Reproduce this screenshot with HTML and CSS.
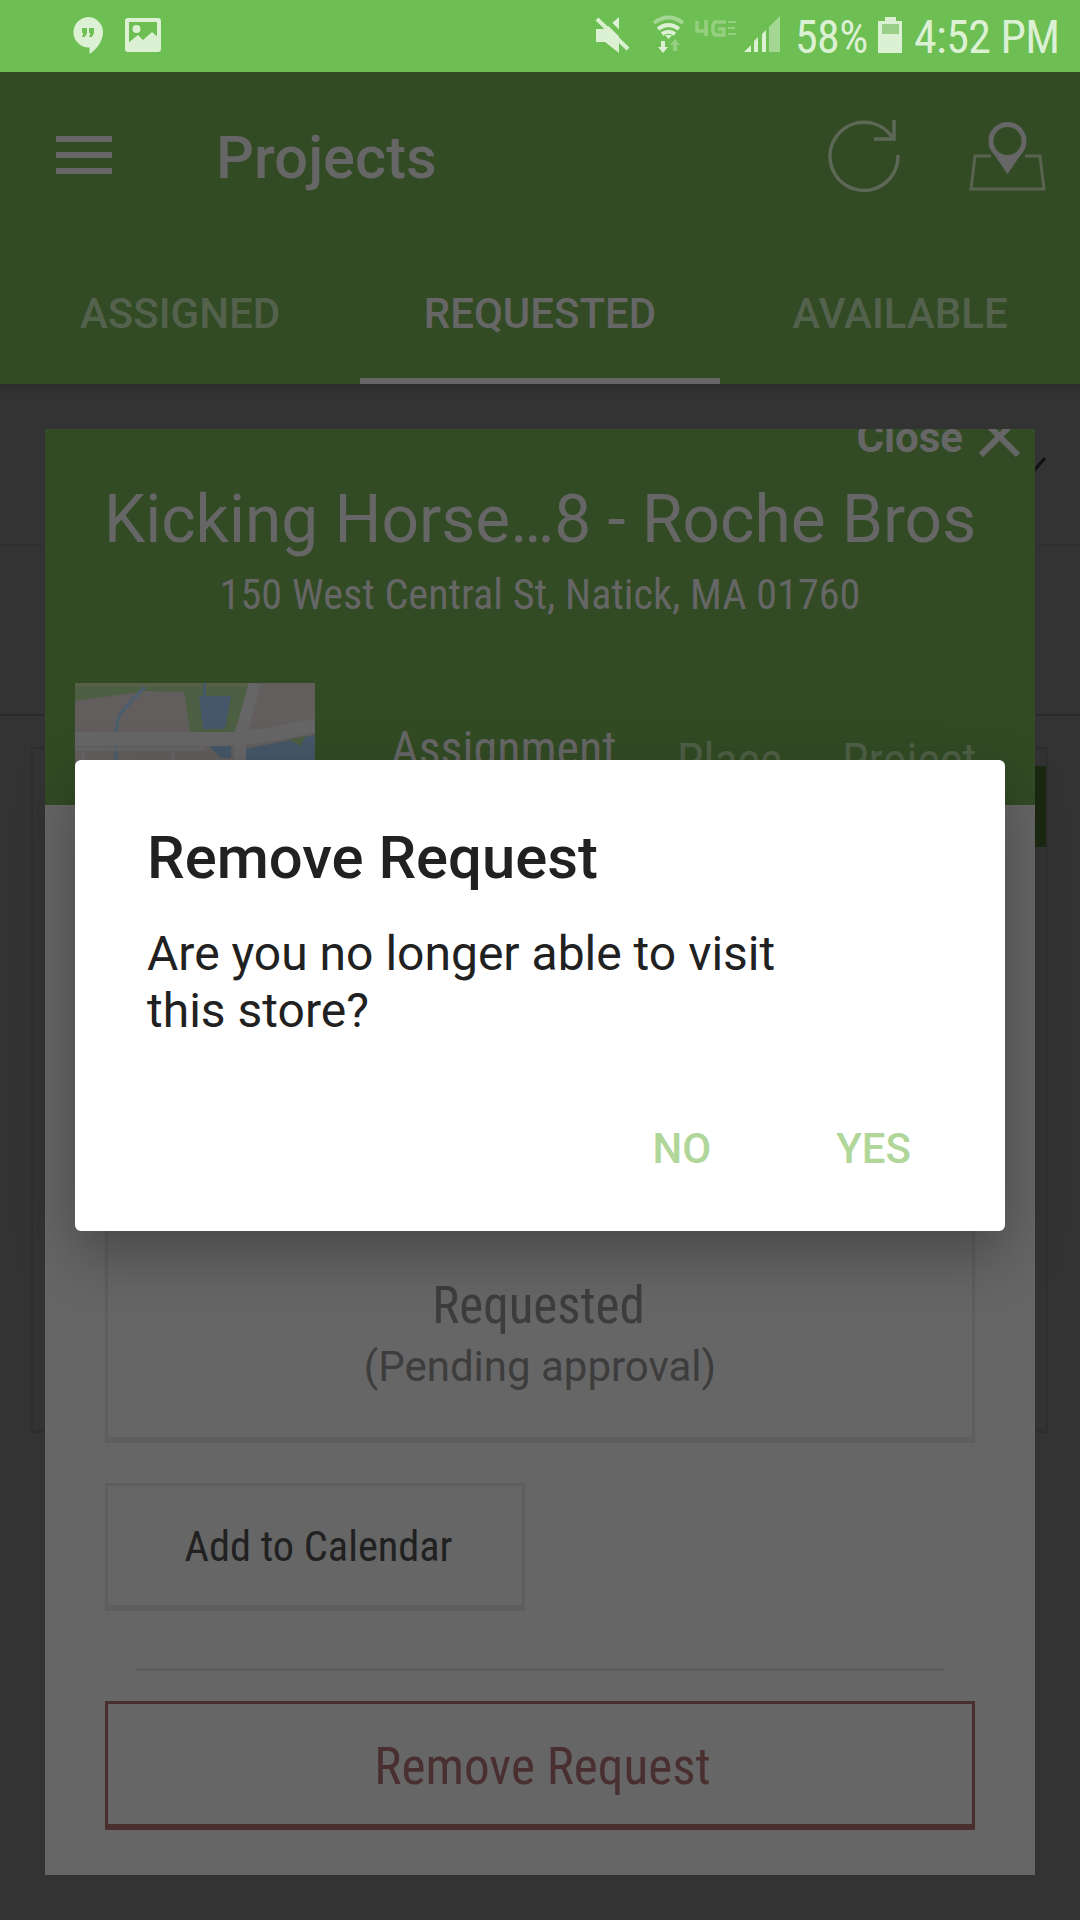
FILE: index.html
```
<!DOCTYPE html>
<html lang="en">
<head>
	<meta charset="UTF-8">
	<title>Projects</title>
	<link rel="stylesheet" href="styles.css">
</head>
<body>
	<div class="screen">
		<div class="status">
			<svg class="notify" width="90" height="72" viewBox="72 0 90 72">
				<path fill="#dcf1d3" d="M88 17a15 15 0 0 1 15 15c0 9-6 17-13.500 22v-6.500A15 15 0 0 1 88 17z"/>
				<path fill="#6dbe53" d="M82 28h5v5l-2 4h-3l1.500-4H82zM89 28h5v5l-2 4h-3l1.500-4H89z"/>
				<rect x="127" y="20" width="32" height="30" rx="1" fill="none" stroke="#dcf1d3" stroke-width="4"/>
				<circle cx="136.500" cy="29" r="4" fill="#dcf1d3"/>
				<path fill="#dcf1d3" d="M128 43l10-8 5 5 9-8 7 6v13h-31z"/>
			</svg>
			<svg class="signals" width="190" height="72" viewBox="594 0 190 72">
				<path fill="#dcf1d3" d="M596 29h9l14-12v36l-14-11h-9z"/>
				<path stroke="#6dbe53" stroke-width="5" d="M600 14l32 32"/>
				<path stroke="#dcf1d3" stroke-width="4" d="M597 19l31 30"/>
				<g fill="none" stroke="#dcf1d3" stroke-width="4">
					<path stroke="#a5d794" d="M654 23q14.500-11 29 0"/>
					<path d="M658 29q10.500-8 21 0"/>
					<path d="M662 34q6.500-4.500 13 0"/>
				</g>
				<path fill="#dcf1d3" d="M665 35h7l-3.500 4zM661 41h4v6h3l-5 6-5-6h3z"/>
				<path fill="#95d080" d="M673 51h4v-6h3l-5-6-5 6h3z"/>
				<g fill="none" stroke="#95d080" stroke-width="3.500">
					<path d="M697 21v10h11M706 20v16M726 22h-11l-2 3v7l2 3h9v-6h-6"/>
					<path stroke-width="2" d="M728 22h8M728 28h7M728 34h8"/>
				</g>
				<path fill="#a5d794" d="M780 16v36h-11V27z"/>
				<path fill="#dcf1d3" d="M744 52l7-7v7zM754 41l4-4v15h-4zM762 34l4-4v22h-4z"/>
			</svg>
			<span class="battery-text"><b class="narrow">58%</b></span>
			<svg class="battery" width="24" height="36" viewBox="0 0 24 36">
				<path fill="#dcf1d3" d="M7 0h11v4h6v32H0V4h7z"/>
				<path fill="#99cf86" d="M4 7h17v10H4z"/>
			</svg>
			<span class="clock"><b class="narrow">4:52 PM</b></span>
		</div>

		<div class="header">
			<div class="toolbar">
				<div class="menu"><i></i><i></i><i></i></div>
				<h1>Projects</h1>
				<svg width="72" height="76" viewBox="828 118 72 76" fill="none" stroke="#5e6857" stroke-width="3.500">
					<path d="M898 155a34 34 0 1 1-6-18"/>
					<path d="M894 120v19h-20"/>
				</svg>
				<svg class="pin" width="80" height="76" viewBox="968 118 80 76">
					<path fill="none" stroke="#59634f" stroke-width="3" d="M991 156h-16l-4 33h73l-4-33h-15"/>
					<path fill="#666" d="M989 147l18.500 27 18.500-27z"/>
					<circle cx="1007.500" cy="141" r="16.500" fill="#324b24" stroke="#666" stroke-width="5"/>
					<path fill="#666" d="M996 153q11.500 5 23 0l-11.500 20z"/>
				</svg>
			</div>
			<div class="tabs">
				<div>ASSIGNED</div>
				<div class="active">REQUESTED</div>
				<div>AVAILABLE</div>
			</div>
		</div>

		<div class="page">
			<!-- project list behind the card -->
			<div class="list">
				<div class="row filter">
					<svg width="30" height="20" viewBox="0 0 30 20"><path fill="none" stroke="#111" stroke-width="3" d="M2 2l13 15L28 2"/></svg>
				</div>
				<div class="row"></div>
				<div class="item"><div class="strip"></div></div>
			</div>

			<div class="card">
				<div class="card-head">
					<div class="close">Close
						<svg width="42" height="42" viewBox="0 0 42 42"><path stroke="#666" stroke-width="6" d="M2 2l37 37M39 2L2 39"/></svg>
					</div>
					<h2>Kicking Horse…8 - Roche Bros</h2>
					<p class="address"><span class="narrow">150 West Central St, Natick, MA 01760</span></p>
					<div class="details">
						<svg class="map" width="240" height="122" viewBox="0 0 240 122">
							<path fill="#625e5d" d="M0 0h240v122H0z"/>
							<path fill="#4d5f43" d="M0 0h175l-16 50h-44L109 9 72 8 0 18z"/>
							<path fill="#625e5d" d="M0 18l72-9 37 1 6 41H0z"/>
							<path fill="#566049" d="M0 0h175l-1 4H0z"/>
							<path fill="#455768" d="M124 13h32l-6 33h-22zM170 66l70-14v70h-70zM134 63h22v12h-10zM128 0h3v14h-3z"/>
							<path fill="none" stroke="#4c5d6c" stroke-width="3.500" d="M70 4L50 25q-9 8-9 28v70"/>
							<path fill="none" stroke="#666" stroke-width="14" d="M0 56h150q30 0 90-14"/>
							<path fill="none" stroke="#666" stroke-width="12" d="M180 0l-15 55v67"/>
							<path fill="none" stroke="#666" stroke-width="3" d="M0 66h130M98 66v56M8 66v56"/>
							<path fill="#4d5f43" d="M214 56l17-3-6 10z"/>
						</svg>
						<div class="subtabs">
							<span class="on">Assignment</span>
							<span>Place</span>
							<span>Project</span>
						</div>
					</div>
				</div>
				<div class="card-body">
					<div class="state">
						<p class="requested"><span class="narrow">Requested</span></p>
						<p class="pending">(Pending approval)</p>
					</div>
					<div class="calendar"><span class="narrow">Add to Calendar</span></div>
					<div class="divider"></div>
					<div class="remove"><span class="narrow">Remove Request</span></div>
				</div>
			</div>
		</div>

		<div class="dialog">
			<h3>Remove Request</h3>
			<p>Are you no longer able to visit<br>this store?</p>
			<div class="buttons">
				<span>NO</span>
				<span>YES</span>
			</div>
		</div>
	</div>
</body>
</html>
```

FILE: styles.css
```
*{
	box-sizing: border-box;
	margin: 0;
	padding: 0;
}
body{
	font-family: Roboto, sans-serif;
	background: #333;
}
svg{
	display: block;
	flex: none;
}
.screen{
	position: relative;
	width: 1080px;
	height: 1920px;
	overflow: hidden;
}
.narrow{
	display: inline-block;
	font-family: "Roboto Condensed", Roboto, sans-serif;
	font-weight: 400;
	white-space: nowrap;
}

/* status bar */
.status{
	display: flex;
	align-items: center;
	height: 72px;
	padding-left: 72px;
	background: #6dbe53;
	color: #dcf1d3;
	font-size: 46px;
	letter-spacing: -.6px;
}
.signals{
	margin-left: 432px;
}
.battery-text{
	width: 94px;
	padding: 2px 0 0 11px;
}
.clock{
	padding: 2px 0 0 12px;
}
.battery{
	margin-top: -2px;
}

/* header */
.header{
	height: 312px;
	background: #324b24;
	color: #666;
}
.toolbar{
	display: flex;
	align-items: center;
	height: 168px;
	padding-left: 56px;
}
.menu{
	display: grid;
	gap: 10px;
	width: 56px;
	margin-top: -2px;
}
.menu i{
	height: 6px;
	background: #666;
}
h1{
	width: 612px;
	margin-left: 104px;
	padding-top: 4px;
	font-size: 59.6px;
	font-weight: 500;
}
.pin{
	margin-left: 68px;
}
.tabs{
	display: flex;
	height: 144px;
	font-size: 42px;
	font-weight: 500;
	line-height: 148px;
	text-align: center;
	color: #54614d;
}
.tabs div{
	flex: 1;
}
.tabs .active{
	color: #666;
	border-bottom: 6px solid #666;
}

/* list and card share the same grid cell */
.page{
	display: grid;
	height: 1536px;
}
.list, .card{
	grid-area: 1 / 1;
}
.list{
	background: linear-gradient(#2b2b2b, #333 10px);
}
.row{
	height: 170px;
	border-bottom: 2px solid #2b2b2b;
}
.filter{
	display: flex;
	justify-content: flex-end;
	height: 162px;
	padding: 72px 33px 0 0;
	border-color: #303030;
}
.item{
	height: 686px;
	margin: 31px 32px 0 31px;
	padding-top: 17px;
	border: 2px solid #2e2e2e;
	border-bottom-width: 4px;
}
.strip{
	height: 81px;
	margin-left: 500px;
	background: #1b2811;
}
.card{
	width: 990px;
	height: 1446px;
	margin: 45px 0 0 45px;
	background: #666;
	overflow: hidden;
}
.card-head{
	display: flow-root;
	height: 376px;
	background: #324b24;
	color: #666;
}
.close{
	display: flex;
	justify-content: flex-end;
	align-items: center;
	gap: 16px;
	height: 42px;
	margin-top: -13px;
	padding-right: 14px;
	font-size: 42px;
	font-weight: 700;
}
h2{
	margin-top: 23px;
	font-size: 65.8px;
	font-weight: 400;
	line-height: 78px;
	text-align: center;
	white-space: nowrap;
}
.address{
	margin-top: 11px;
	font-size: 42.2px;
	line-height: 50px;
	text-align: center;
}
.details{
	display: flex;
	margin: 63px 0 0 30px;
}
.subtabs{
	display: flex;
	align-items: flex-start;
	padding: 41px 0 0 76px;
	font-family: "Roboto Condensed", Roboto, sans-serif;
	font-size: 48px;
	line-height: 50px;
	color: #4f5f46;
}
.subtabs span{
	width: 165px;
	padding-top: 12px;
}
.subtabs .on{
	width: 286px;
	padding-top: 0;
	color: #666;
}
.card-body{
	padding: 195px 60px 0;
}
.state, .calendar{
	border: 3px solid #5e5e5e;
	border-bottom-width: 6px;
}
.state{
	height: 443px;
	padding-top: 273px;
	text-align: center;
	color: #3d3d3d;
}
.requested{
	padding-right: 3px;
	font-size: 51px;
	line-height: 60px;
}
.pending{
	font-size: 42px;
	line-height: 62px;
}
.calendar{
	width: 420px;
	height: 128px;
	margin-top: 40px;
	padding-left: 7px;
	font-size: 42.4px;
	line-height: 122px;
	text-align: center;
	color: #212121;
}
.divider{
	height: 3px;
	margin: 57px 30px 0;
	background: #5e5e5e;
}
.remove{
	height: 129px;
	margin-top: 30px;
	padding-left: 5px;
	border: 3px solid #4a2f31;
	border-bottom-width: 6px;
	font-size: 51.2px;
	line-height: 126px;
	text-align: center;
	color: #4a2f31;
}

/* dialog on top of everything */
.dialog{
	position: absolute;
	left: 75px;
	top: 760px;
	width: 930px;
	height: 471px;
	padding: 63px 72px;
	border-radius: 6px;
	background: #fff;
	color: #212121;
	box-shadow: 0 24px 60px rgba(0,0,0,.3);
}
h3{
	font-size: 59.8px;
	font-weight: 500;
	line-height: 70px;
}
.dialog p{
	margin-top: 32px;
	font-size: 48px;
	line-height: 57px;
}
.buttons{
	display: flex;
	justify-content: flex-end;
	gap: 125px;
	margin-top: 85px;
	padding-right: 22px;
	font-size: 42px;
	font-weight: 500;
	line-height: 50px;
	color: #b1d69a;
}
```
